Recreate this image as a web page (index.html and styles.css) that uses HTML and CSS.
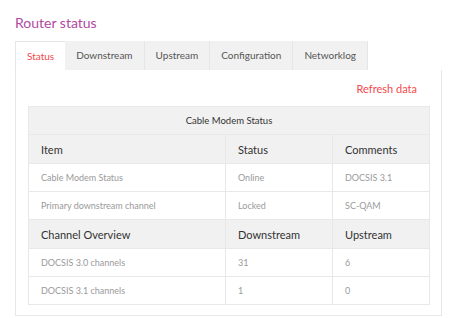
FILE: index.html
```html
<!DOCTYPE html>
<html lang="en">
<head>
    <meta charset="UTF-8">
    <title>Router status</title>
    <link rel="stylesheet" href="styles.css">
</head>
<body>

<div class="page">
    <h1>Router status</h1>

    <div class="tabs">
        <a href="#" class="tab active">Status</a>
        <a href="#" class="tab">Downstream</a>
        <a href="#" class="tab">Upstream</a>
        <a href="#" class="tab">Configuration</a>
        <a href="#" class="tab">Networklog</a>
    </div>

    <div class="panel">
        <div class="refresh-row">
            <a href="#" class="refresh">Refresh data</a>
        </div>

        <table>
            <colgroup>
                <col class="c1">
                <col class="c2">
                <col class="c3">
            </colgroup>
            <tr class="caption-row">
                <td colspan="3">Cable Modem Status</td>
            </tr>
            <tr class="head-row">
                <th>Item</th>
                <th>Status</th>
                <th>Comments</th>
            </tr>
            <tr>
                <td>Cable Modem Status</td>
                <td>Online</td>
                <td>DOCSIS 3.1</td>
            </tr>
            <tr>
                <td>Primary downstream channel</td>
                <td>Locked</td>
                <td>SC-QAM</td>
            </tr>
            <tr class="head-row">
                <th>Channel Overview</th>
                <th>Downstream</th>
                <th>Upstream</th>
            </tr>
            <tr>
                <td>DOCSIS 3.0 channels</td>
                <td>31</td>
                <td>6</td>
            </tr>
            <tr>
                <td>DOCSIS 3.1 channels</td>
                <td>1</td>
                <td>0</td>
            </tr>
        </table>
    </div>
</div>

</body>
</html>
```

FILE: styles.css
```css
body {
    margin: 0;
    font-family: 'Lato', sans-serif;
    background-color: #ffffff;
    color: #333;
}
.page {
    padding: 0 8px 0 15px;
}
h1 {
    margin: 14px 0 9px;
    font-size: 14px;
    line-height: 18px;
    font-weight: 400;
    color: #b04a9f;
}
.tabs {
    display: flex;
}
.tab {
    display: block;
    height: 29px;
    line-height: 29px;
    padding: 0 11px;
    font-size: 10px;
    color: #555;
    text-decoration: none;
    background-color: #f1f1f1;
    border-right: 1px solid #e6e6e6;
    box-sizing: border-box;
}
.tab.active {
    background-color: #fff;
    color: #f5484c;
    border-left: 1px solid #e6e6e6;
    border-top: 1px solid #e6e6e6;
    border-right: none;
}
.panel {
    border: 1px solid #e8e8e8;
    border-top: none;
    padding: 0 12px 10px;
    width: 427px;
    box-sizing: border-box;
}
.refresh-row {
    height: 36px;
    display: flex;
    align-items: center;
    justify-content: flex-end;
    padding-right: 12px;
}
.refresh {
    color: #f5484c;
    font-size: 11px;
    text-decoration: none;
}
table {
    width: 401px;
    border-collapse: collapse;
    table-layout: fixed;
}
.c1 { width: 197px; }
.c2 { width: 107px; }
.c3 { width: 97px; }
th, td {
    border: 1px solid #e8e8e8;
    padding: 0 12px;
    text-align: left;
    height: 27px;
}
td {
    font-size: 9px;
    color: #9a9a9a;
}
th {
    font-size: 11px;
    font-weight: 400;
    color: #333;
    background-color: #f1f1f1;
    height: 28px;
}
.caption-row td {
    text-align: center;
    background-color: #f1f1f1;
    color: #333;
    font-size: 9.5px;
}
```
